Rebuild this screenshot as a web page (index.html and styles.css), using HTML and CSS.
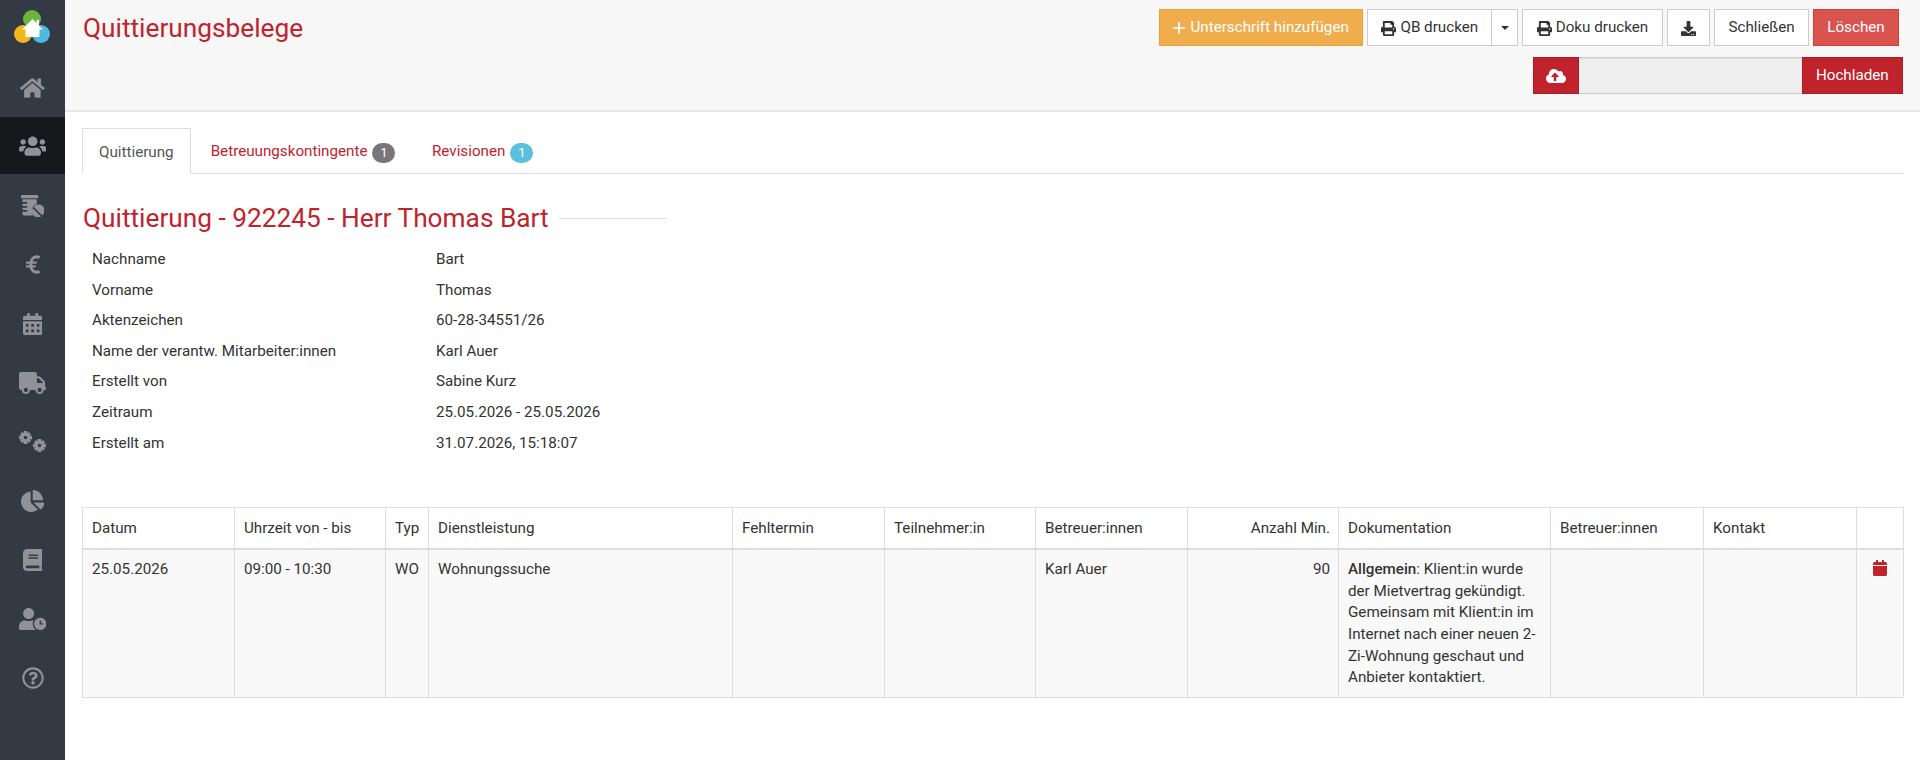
FILE: index.html
```html
<!DOCTYPE html>
<html lang="de">
<head>
    <meta charset="UTF-8">
    <title>Quittierungsbelege</title>
    <link rel="stylesheet" href="styles.css">
</head>
<body>
    <nav class="sidebar">
        <div class="logo">
            <svg viewBox="0 0 40 38" width="40" height="38">
                <circle cx="20" cy="11" r="9" fill="#6db33f"/>
                <circle cx="11" cy="26" r="9" fill="#f2b61f"/>
                <circle cx="29" cy="26" r="9" fill="#4db9dc"/>
                <path d="M20.5 11L10 21.5h3.5V29h14v-7.5H31l-4-4V12h-2.5v3z" fill="#fff"/>
            </svg>
        </div>
        <a class="nav-item"><svg class="nav-icon" viewBox="0 0 576 512"><path d="M280.37 148.26L96 300.11V464a16 16 0 0 0 16 16l112.06-.29a16 16 0 0 0 15.92-16V368a16 16 0 0 1 16-16h64a16 16 0 0 1 16 16v95.64a16 16 0 0 0 16 16.05L464 480a16 16 0 0 0 16-16V300L295.67 148.26a12.19 12.19 0 0 0-15.3 0zM571.6 251.47L488 182.56V44.05a12 12 0 0 0-12-12h-56a12 12 0 0 0-12 12v72.61L318.47 43a48 48 0 0 0-61 0L4.34 251.47a12 12 0 0 0-1.6 16.9l25.5 31A12 12 0 0 0 45.15 301l235.22-193.74a12.19 12.19 0 0 1 15.3 0L530.9 301a12 12 0 0 0 16.9-1.6l25.5-31a12 12 0 0 0-1.7-16.93z"/></svg></a>
        <a class="nav-item active"><svg class="nav-icon" viewBox="0 0 640 512"><path d="M96 224c35.3 0 64-28.7 64-64s-28.7-64-64-64-64 28.7-64 64 28.7 64 64 64zm448 0c35.3 0 64-28.7 64-64s-28.7-64-64-64-64 28.7-64 64 28.7 64 64 64zm32 32h-64c-17.6 0-33.5 7.1-45.1 18.6 40.3 22.1 68.9 62 75.1 109.4h66c17.7 0 32-14.3 32-32v-32c0-35.3-28.7-64-64-64zm-256 0c61.9 0 112-50.1 112-112S381.9 32 320 32 208 82.1 208 144s50.1 112 112 112zm76.8 32h-8.3c-20.8 10-43.9 16-68.5 16s-47.6-6-68.5-16h-8.3C179.6 288 128 339.6 128 403.2V432c0 26.5 21.5 48 48 48h288c26.5 0 48-21.5 48-48v-28.8c0-63.6-51.6-115.2-115.2-115.2zm-223.7-13.4C161.5 263.1 145.6 256 128 256H64c-35.3 0-64 28.7-64 64v32c0 17.7 14.3 32 32 32h65.9c6.3-47.4 34.9-87.3 75.2-109.4z"/></svg></a>
        <a class="nav-item"><svg class="nav-icon" viewBox="0 0 25 23"><path d="M1 0h16a1 1 0 0 1 1 1v1.500a1 1 0 0 1-1 1H1a1 1 0 0 1-1-1V1a1 1 0 0 1 1-1zM1.500 4.500h15v5.200a7.500 7.500 0 0 0-5 7.300 7.500 7.500 0 0 0 1.200 4.500H3.500a2 2 0 0 1-2-2v-2h5v-1.800h-5v-2.400h5v-1.800h-5V9.100h5V7.300h-5z"/><path d="M18.500 10a6.300 6.300 0 0 0-5.100 2.600l8.700 8.700A6.300 6.300 0 0 0 18.500 10zM12.300 13.900a6.300 6.300 0 0 0 8.600 8.600z"/></svg></a>
        <a class="nav-item"><svg class="nav-icon euro" viewBox="0 0 14 19"><path d="M13.500 2.800A7 7 0 0 0 10.500 1.800C6.800 1.800 4.800 5.200 4.800 9.500S6.800 17.200 10.500 17.200c1.100 0 2.100-.3 3-.9" fill="none" stroke="currentColor" stroke-width="3"/><path d="M0 6.600h11l-.5 2.100H0zM0 10.300h10l-.5 2.100H0z"/></svg></a>
        <a class="nav-item"><svg class="nav-icon" viewBox="0 0 448 512"><path d="M0 464c0 26.500 21.500 48 48 48h352c26.500 0 48-21.500 48-48V192H0v272zm320-196c0-6.600 5.400-12 12-12h40c6.600 0 12 5.400 12 12v40c0 6.600-5.400 12-12 12h-40c-6.600 0-12-5.400-12-12v-40zm0 128c0-6.600 5.400-12 12-12h40c6.600 0 12 5.400 12 12v40c0 6.600-5.400 12-12 12h-40c-6.600 0-12-5.400-12-12v-40zM192 268c0-6.600 5.400-12 12-12h40c6.600 0 12 5.400 12 12v40c0 6.600-5.400 12-12 12h-40c-6.600 0-12-5.400-12-12v-40zm0 128c0-6.600 5.400-12 12-12h40c6.600 0 12 5.400 12 12v40c0 6.600-5.400 12-12 12h-40c-6.600 0-12-5.400-12-12v-40zM64 268c0-6.600 5.400-12 12-12h40c6.600 0 12 5.400 12 12v40c0 6.600-5.400 12-12 12H76c-6.600 0-12-5.400-12-12v-40zm0 128c0-6.600 5.400-12 12-12h40c6.600 0 12 5.400 12 12v40c0 6.600-5.400 12-12 12H76c-6.600 0-12-5.400-12-12v-40zM400 64h-48V16c0-8.800-7.200-16-16-16h-32c-8.800 0-16 7.200-16 16v48H160V16c0-8.800-7.200-16-16-16h-32c-8.800 0-16 7.200-16 16v48H48C21.500 64 0 85.500 0 112v48h448v-48c0-26.500-21.500-48-48-48z"/></svg></a>
        <a class="nav-item"><svg class="nav-icon" viewBox="0 0 640 512"><path d="M624 352h-16V243.900c0-12.700-5.100-24.900-14.100-33.900L494 110.100c-9-9-21.200-14.100-33.900-14.100H416V48c0-26.500-21.500-48-48-48H48C21.500 0 0 21.500 0 48v320c0 26.500 21.500 48 48 48h16c0 53 43 96 96 96s96-43 96-96h128c0 53 43 96 96 96s96-43 96-96h48c8.800 0 16-7.200 16-16v-32c0-8.800-7.200-16-16-16zM160 464c-26.500 0-48-21.500-48-48s21.500-48 48-48 48 21.500 48 48-21.500 48-48 48zm320 0c-26.500 0-48-21.500-48-48s21.500-48 48-48 48 21.500 48 48-21.500 48-48 48zm80-208H416V144h44.100l99.900 99.900V256z"/></svg></a>
        <a class="nav-item"><svg class="nav-icon cogs" viewBox="0 0 27 21"><g id="gear"><circle cx="6.500" cy="6.500" r="3.300" fill="none" stroke="currentColor" stroke-width="3"/><path d="M4.800 0h3.400l.4 3H4.400zM4.800 13h3.400l.4-3H4.400zM0 4.800v3.400l3 .4V4.400zM13 4.800v3.400l-3 .4V4.400zM1 3.200L3.200 1l2.200 2.200L3.200 5.400zM12 9.800L9.800 12 7.600 9.800 9.800 7.600zM3.200 12L1 9.800l2.200-2.200 2.200 2.200zM9.800 1L12 3.200 9.800 5.400 7.600 3.200z"/></g><use href="#gear" x="14" y="8"/></svg></a>
        <a class="nav-item"><svg class="nav-icon" viewBox="0 0 544 512"><path d="M527.790 288H290.500l158.030 158.030c6.040 6.040 15.980 6.530 22.190.68 38.700-36.460 65.320-85.610 73.130-140.860 1.340-9.460-6.510-17.850-16.060-17.850zm-15.830-64.800C503.720 103.740 408.260 8.280 288.800.04 279.680-.59 272 7.100 272 16.240V240h223.770c9.140 0 16.820-7.680 16.190-16.800zM224 288V50.710c0-9.550-8.390-17.400-17.840-16.060C86.990 51.490-4.100 155.600.14 280.370 4.500 408.510 114.830 513.590 243.030 511.980c50.400-.63 96.970-16.870 135.260-44.030 7.900-5.600 8.420-17.230 1.570-24.080L224 288z"/></svg></a>
        <a class="nav-item"><svg class="nav-icon" viewBox="0 0 448 512"><path d="M448 360V24c0-13.300-10.700-24-24-24H96C43 0 0 43 0 96v320c0 53 43 96 96 96h328c13.300 0 24-10.700 24-24v-16c0-7.500-3.500-14.300-8.900-18.700-4.200-15.400-4.200-59.300 0-74.700 5.400-4.300 8.900-11.100 8.900-18.600zM128 134c0-3.300 2.700-6 6-6h212c3.300 0 6 2.700 6 6v20c0 3.300-2.700 6-6 6H134c-3.300 0-6-2.700-6-6v-20zm0 64c0-3.300 2.700-6 6-6h212c3.300 0 6 2.700 6 6v20c0 3.300-2.700 6-6 6H134c-3.300 0-6-2.700-6-6v-20zm253.400 250H96c-17.700 0-32-14.300-32-32 0-17.600 14.400-32 32-32h285.400c-1.900 17.100-1.900 46.900 0 64z"/></svg></a>
        <a class="nav-item"><svg class="nav-icon" viewBox="0 0 640 512"><path d="M496 224c-79.600 0-144 64.400-144 144s64.400 144 144 144 144-64.400 144-144-64.400-144-144-144zm64 150.300c0 5.300-4.400 9.700-9.700 9.700h-60.600c-5.300 0-9.700-4.400-9.700-9.700v-76.600c0-5.300 4.400-9.700 9.700-9.700h12.600c5.300 0 9.700 4.400 9.700 9.700V352h38.300c5.300 0 9.700 4.400 9.700 9.700v12.600zM320 368c0-27.800 6.700-54.100 18.200-77.500-8-1.500-16.200-2.500-24.600-2.500h-16.700c-22.200 10.200-46.900 16-72.900 16s-50.600-5.800-72.900-16h-16.700C60.200 288 0 348.200 0 422.400V464c0 26.500 21.500 48 48 48h347.100c-45.300-31.900-75.100-84.500-75.100-144zm-96-112c70.700 0 128-57.300 128-128S294.700 0 224 0 96 57.300 96 128s57.300 128 128 128z"/></svg></a>
        <a class="nav-item"><svg class="nav-icon" viewBox="0 0 512 512"><path d="M256 8C119.043 8 8 119.083 8 256c0 136.997 111.043 248 248 248s248-111.003 248-248C504 119.083 392.957 8 256 8zm0 448c-110.532 0-200-89.431-200-200 0-110.495 89.472-200 200-200 110.491 0 200 89.471 200 200 0 110.530-89.431 200-200 200zm107.244-255.200c0 67.052-72.421 68.084-72.421 92.863V300c0 6.627-5.373 12-12 12h-45.647c-6.627 0-12-5.373-12-12v-8.659c0-35.745 27.100-50.034 47.579-61.516 17.561-9.845 28.324-16.541 28.324-29.579 0-17.246-21.999-28.693-39.784-28.693-23.189 0-33.894 10.977-48.942 29.969-4.057 5.120-11.460 6.071-16.666 2.124l-27.824-21.098c-5.107-3.872-6.251-11.066-2.644-16.363C184.846 131.491 214.940 112 261.794 112c49.071 0 101.450 38.304 101.450 88.800zM298 368c0 23.159-18.841 42-42 42s-42-18.841-42-42 18.841-42 42-42 42 18.841 42 42z"/></svg></a>
    </nav>

    <div class="main">
        <header class="page-header">
            <h1>Quittierungsbelege</h1>
            <div class="actions">
                <div class="action-row">
                    <button class="btn btn-warning"><svg class="plus" viewBox="0 0 14 14"><path d="M6 0h2v6h6v2H8v6H6V8H0V6h6z"/></svg>Unterschrift hinzufügen</button>
                    <div class="btn-group">
                        <button class="btn"><svg class="ico" viewBox="0 0 512 512"><path d="M448 192V77.250c0-8.490-3.370-16.620-9.370-22.630L393.370 9.370c-6-6-14.140-9.370-22.630-9.370H96C78.330 0 64 14.330 64 32v160c-35.350 0-64 28.650-64 64v112c0 8.840 7.160 16 16 16h48v96c0 17.670 14.330 32 32 32h320c17.670 0 32-14.330 32-32v-96h48c8.840 0 16-7.160 16-16V256c0-35.350-28.650-64-64-64zm-64 256H128v-96h256v96zm0-224H128V64h192v48c0 8.840 7.160 16 16 16h48v96zm48 72c-13.250 0-24-10.750-24-24 0-13.260 10.750-24 24-24s24 10.740 24 24c0 13.250-10.750 24-24 24z"/></svg>QB drucken</button>
                        <button class="btn btn-caret"><span class="caret"></span></button>
                    </div>
                    <button class="btn"><svg class="ico" viewBox="0 0 512 512"><path d="M448 192V77.250c0-8.490-3.370-16.620-9.370-22.630L393.370 9.370c-6-6-14.140-9.370-22.630-9.370H96C78.330 0 64 14.330 64 32v160c-35.350 0-64 28.650-64 64v112c0 8.840 7.160 16 16 16h48v96c0 17.670 14.330 32 32 32h320c17.670 0 32-14.330 32-32v-96h48c8.840 0 16-7.160 16-16V256c0-35.350-28.650-64-64-64zm-64 256H128v-96h256v96zm0-224H128V64h192v48c0 8.840 7.160 16 16 16h48v96zm48 72c-13.250 0-24-10.750-24-24 0-13.260 10.750-24 24-24s24 10.740 24 24c0 13.250-10.750 24-24 24z"/></svg>Doku drucken</button>
                    <button class="btn"><svg class="ico solo" viewBox="0 0 512 512"><path d="M216 0h80c13.300 0 24 10.700 24 24v168h87.700c17.800 0 26.700 21.500 14.100 34.100L269.700 378.300c-7.500 7.500-19.800 7.500-27.300 0L90.100 226.100c-12.600-12.600-3.700-34.100 14.100-34.100H192V24c0-13.300 10.700-24 24-24zm296 376v112c0 13.300-10.700 24-24 24H24c-13.300 0-24-10.700-24-24V376c0-13.300 10.700-24 24-24h146.700l49 49c20.100 20.100 52.500 20.100 72.600 0l49-49H488c13.300 0 24 10.700 24 24zm-124 88c0-11-9-20-20-20s-20 9-20 20 9 20 20 20 20-9 20-20zm64 0c0-11-9-20-20-20s-20 9-20 20 9 20 20 20 20-9 20-20z"/></svg></button>
                    <button class="btn">Schließen</button>
                    <button class="btn btn-danger">Löschen</button>
                </div>
                <div class="upload">
                    <span class="upload-icon"><svg viewBox="0 0 640 512"><path d="M537.600 226.600c4.100-10.700 6.400-22.400 6.400-34.600 0-53-43-96-96-96-19.700 0-38.100 6-53.300 16.200C367 64.200 315.300 32 256 32c-88.400 0-160 71.600-160 160 0 2.700.1 5.400.2 8.100C40.200 219.800 0 273.200 0 336c0 79.500 64.500 144 144 144h368c70.700 0 128-57.300 128-128 0-61.900-44-113.600-102.400-125.400zM393.400 288H328v112c0 8.800-7.200 16-16 16h-48c-8.800 0-16-7.200-16-16V288h-65.400c-14.300 0-21.400-17.200-11.300-27.300l105.400-105.400c6.200-6.200 16.400-6.200 22.600 0l105.400 105.400c10.100 10.100 2.900 27.300-11.300 27.300z"/></svg></span>
                    <span class="upload-field"></span>
                    <button class="btn btn-primary">Hochladen</button>
                </div>
            </div>
        </header>

        <div class="content">
            <ul class="tabs">
                <li class="tab active">Quittierung</li>
                <li class="tab">Betreuungskontingente<span class="badge">1</span></li>
                <li class="tab">Revisionen<span class="badge badge-info">1</span></li>
            </ul>

            <div class="section-title">
                <h2>Quittierung - 922245 - Herr Thomas Bart</h2>
                <span class="title-line"></span>
            </div>

            <dl class="details">
                <dt>Nachname</dt><dd>Bart</dd>
                <dt>Vorname</dt><dd>Thomas</dd>
                <dt>Aktenzeichen</dt><dd>60-28-34551/26</dd>
                <dt>Name der verantw. Mitarbeiter:innen</dt><dd>Karl Auer</dd>
                <dt>Erstellt von</dt><dd>Sabine Kurz</dd>
                <dt>Zeitraum</dt><dd>25.05.2026 - 25.05.2026</dd>
                <dt>Erstellt am</dt><dd>31.07.2026, 15:18:07</dd>
            </dl>

            <table class="data-table">
                <colgroup>
                    <col class="c-datum"><col class="c-zeit"><col class="c-typ"><col class="c-dienst"><col class="c-fehl"><col class="c-teil"><col class="c-betr"><col class="c-min"><col class="c-doku"><col class="c-betr2"><col class="c-kontakt"><col>
                </colgroup>
                <thead>
                    <tr>
                        <th>Datum</th><th>Uhrzeit von - bis</th><th>Typ</th><th>Dienstleistung</th><th>Fehltermin</th><th>Teilnehmer:in</th><th>Betreuer:innen</th><th class="right">Anzahl Min.</th><th>Dokumentation</th><th>Betreuer:innen</th><th>Kontakt</th><th></th>
                    </tr>
                </thead>
                <tbody>
                    <tr>
                        <td>25.05.2026</td><td>09:00 - 10:30</td><td>WO</td><td>Wohnungssuche</td><td></td><td></td><td>Karl Auer</td><td class="right">90</td>
                        <td><strong>Allgemein</strong>: Klient:in wurde der Mietvertrag gekündigt. Gemeinsam mit Klient:in im Internet nach einer neuen 2-Zi-Wohnung geschaut und Anbieter kontaktiert.</td>
                        <td></td><td></td>
                        <td class="center"><svg class="cal" viewBox="0 0 448 512"><path d="M12 192h424c6.600 0 12 5.400 12 12v260c0 26.500-21.500 48-48 48H48c-26.500 0-48-21.500-48-48V204c0-6.600 5.400-12 12-12zm436-44v-36c0-26.500-21.500-48-48-48h-48V12c0-6.600-5.400-12-12-12h-40c-6.600 0-12 5.400-12 12v52H160V12c0-6.600-5.400-12-12-12h-40c-6.600 0-12 5.400-12 12v52H48C21.500 64 0 85.500 0 112v36c0 6.600 5.400 12 12 12h424c6.600 0 12-5.400 12-12z"/></svg></td>
                    </tr>
                </tbody>
            </table>
        </div>
    </div>
</body>
</html>
```

FILE: styles.css
```css
* {
    box-sizing: border-box;
}

html, body {
    height: 100%;
}

body {
    margin: 0;
    display: flex;
    overflow: hidden;
    font-family: Roboto, "Liberation Sans", sans-serif;
    font-size: 15.2px;
    line-height: 21.7px;
    color: #333;
    background: #fff;
}

.sidebar {
    width: 65px;
    flex-shrink: 0;
    background: #343a43;
}

.logo {
    height: 58px;
    padding: 8px 0 0 12px;
}

.logo svg {
    display: block;
}

.nav-item {
    display: flex;
    align-items: center;
    justify-content: center;
    height: 59px;
    color: #8f9397;
}

.nav-item.active {
    height: 57px;
    margin-bottom: 2px;
    background: #16181c;
}

.nav-icon {
    height: 22px;
    fill: currentColor;
}

.nav-icon.euro {
    height: 19px;
}

.nav-icon.cogs {
    height: 21px;
}

.main {
    flex: 1;
    min-width: 0;
}

.page-header {
    display: flex;
    justify-content: space-between;
    height: 112px;
    padding: 9px 17px 0 18px;
    background: #f7f7f7;
    border-bottom: 2px solid #e7e7e7;
}

h1 {
    margin: 5px 0 0;
    font-size: 26.25px;
    line-height: 28px;
    font-weight: 400;
    color: #c1232c;
}

.actions {
    display: flex;
    flex-direction: column;
    align-items: flex-end;
    gap: 11px;
}

.action-row {
    display: flex;
    gap: 4px;
    margin-right: 4px;
}

.btn {
    display: inline-flex;
    align-items: center;
    height: 37px;
    padding: 1px 13.3px 0;
    font: inherit;
    color: #333;
    background: #fff;
    border: 1px solid #ccc;
}

.btn-warning {
    color: #fff;
    background: #f0ad4e;
    border-color: #eea236;
}

.btn-danger {
    color: #fff;
    background: #d9534f;
    border-color: #d43f3a;
}

.btn-primary {
    color: #fff;
    background: #c1232c;
    border-color: #a91e26;
}

.btn-group {
    display: flex;
}

.btn-caret {
    width: 27px;
    padding: 0;
    justify-content: center;
    margin-left: -1px;
}

.caret {
    border-top: 4px solid #333;
    border-left: 4px solid transparent;
    border-right: 4px solid transparent;
}

.plus {
    width: 12px;
    height: 12px;
    margin-right: 5px;
    fill: #fff;
}

.ico {
    width: 15px;
    height: 15px;
    margin-right: 4px;
    fill: #333;
}

.ico.solo {
    margin-right: 0;
}

.upload {
    display: flex;
    width: 370px;
    height: 37px;
}

.upload-icon {
    display: flex;
    align-items: center;
    justify-content: center;
    width: 46px;
    background: #c1232c;
    border: 1px solid #a91e26;
}

.upload-icon svg {
    width: 20px;
    height: 16px;
    fill: #fff;
}

.upload-field {
    flex: 1;
    background: #eee;
    border-top: 1px solid #ccc;
    border-bottom: 1px solid #ccc;
    box-shadow: inset 0 1px 1px rgba(0, 0, 0, 0.075);
}

.content {
    padding: 16px 16px 0 17px;
}

.tabs {
    display: flex;
    height: 46px;
    margin: 0;
    padding: 0;
    list-style: none;
    border-bottom: 1px solid #ddd;
}

.tab {
    height: 46px;
    margin-left: 2px;
    padding: 13px 16.5px 0 18px;
    color: #c1232c;
}

.tab.active {
    margin-left: 0;
    padding: 13px 16px 0;
    color: #555;
    background: #fff;
    border: 1px solid #ddd;
    border-bottom-color: #fff;
}

.badge {
    display: inline-block;
    min-width: 23px;
    height: 20px;
    margin-left: 5px;
    padding: 1px 7px;
    font-size: 13px;
    line-height: 18px;
    color: #fff;
    text-align: center;
    vertical-align: -1px;
    background: #777;
    border-radius: 10px;
}

.badge-info {
    background: #5bc0de;
}

.section-title {
    display: flex;
    align-items: center;
    gap: 10px;
    width: 584px;
    margin-top: 30px;
    padding-left: 1px;
}

h2 {
    margin: 0;
    font-size: 26.25px;
    line-height: 28px;
    font-weight: 400;
    color: #c1232c;
    white-space: nowrap;
}

.title-line {
    flex: 1;
    height: 1px;
    background: #ddd;
}

.details {
    display: grid;
    grid-template-columns: 344px 1fr;
    grid-auto-rows: 30.6px;
    align-items: center;
    margin: 12.5px 0 0;
    padding-left: 10px;
}

.details dt,
.details dd {
    margin: 0;
}

.data-table {
    width: 1822px;
    margin-top: 48px;
    table-layout: fixed;
    border-collapse: collapse;
}

.c-datum { width: 152px; }
.c-zeit { width: 151px; }
.c-typ { width: 43px; }
.c-dienst { width: 304px; }
.c-fehl { width: 152px; }
.c-teil { width: 151px; }
.c-betr { width: 152px; }
.c-min { width: 151px; }
.c-doku { width: 212px; }
.c-betr2 { width: 153px; }
.c-kontakt { width: 153px; }

.data-table th,
.data-table td {
    text-align: left;
    vertical-align: top;
    border: 1px solid #ddd;
}

.data-table th {
    padding: 10px 8px 8.5px 9px;
    font-weight: 400;
    border-bottom: 2px solid #ddd;
}

.data-table td {
    padding: 9px 8px 7.8px 9px;
    background: #f9f9f9;
}

.data-table .right {
    text-align: right;
}

.data-table .center {
    padding-right: 9px;
    text-align: center;
}

strong {
    font-weight: 500;
}

.cal {
    display: inline-block;
    width: 14px;
    height: 16px;
    vertical-align: -2px;
    fill: #c1232c;
}
```
